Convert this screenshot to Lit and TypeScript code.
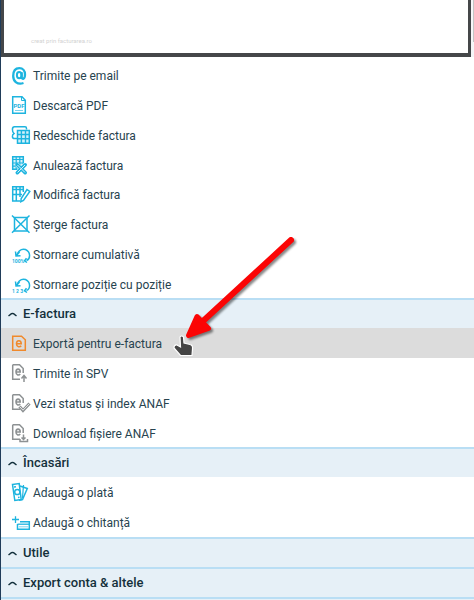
import { LitElement, html, svg, css, nothing } from "lit";
import { customElement, property } from "lit/decorators.js";
import { classMap } from "lit/directives/class-map.js";

const eDoc = svg`<path d="M1.7 .8H8.5L12.2 4.5V9M1.7 .8V15.2H9" /><path stroke-width="1.600" d="M5 8H9.2C9.2 4.200 5 4.200 5 8C5 11.500 8 11.500 9.200 10" />`;

const table = svg`<path d="M1.700 .7H12.300V13.300H1.700Z" fill="#d3f1fa" /><path d="M1.700 3.500H12.300M1.700 7H12.300M1.700 10.200H12.300M5.200 .7V13.300M8.800 .7V13.300" stroke-width="1.200" />`;

const undo = svg`<path d="M5.500 10.500C7.500 5.500 11 3.500 14.500 4.500C20 7 19.500 14 15.500 15.500" /><path d="M4.500 6.500L5 11L9.500 10.700M8.500 7L5.500 10.500M15.500 13.300L13.500 15.800L16 17.500" />`;

const icons: Record<string, unknown> = {
  at: svg`<path stroke-width="2.300" d="M12.500 17C6.500 19 2.200 15.500 2.200 10C2.200 5 4.500 2.200 8.300 2.200C12 2.200 14 5 14 8.500C14 13.500 10.900 13.500 10.700 11.500V6.200" /><ellipse stroke-width="2" cx="8.200" cy="9.200" rx="2.300" ry="3.100" />`,
  pdf: svg`<path d="M1.700 .8H11L14.300 4.200V17.200H1.700Z" /><path d="M10.500 1V4.500H14" stroke-width="1" /><text x="8" y="12" font-size="6" text-anchor="middle">PDF</text><path d="M4 14.500H12" stroke-width=".6" />`,
  reopen: svg`<path d="M15.500 3.500V2.500C15.500 1.300 15 .8 14 .8H3.500C.8 .8 .8 5.500 3 7.500C.6 9 1 12.500 3.500 12.500H6" /><path d="M6.500 4.500H18.300V17.300H6.500Z" fill="#d3f1fa" /><path d="M6.500 8.500H18.300M6.500 12.800H18.300M10.400 4.500V17.300M14.500 4.500V17.300" stroke-width="1.400" />`,
  cancel: svg`${table}<path d="M6 8.500L14.500 17M14.500 8.500L6 17" stroke="#fff" stroke-width="4.500" /><path d="M6.300 8.800L14.200 16.700M14.200 8.800L6.300 16.700" stroke-width="3.600" stroke-linecap="round" /><path d="M6.500 9L14 16.500M14 9L6.500 16.500" stroke="#d9f3fb" stroke-width="1" />`,
  edit: svg`<g transform="translate(0 1)"><path d="M12.300 6V.7H1.700V15H9" /><path d="M1.700 3.500H12.300M1.700 8.500H11M5.300 .7V15M9 .7V11" stroke-width="1.500" /></g><path d="M16 4.500L18.800 6.500L12.500 15.500L9.800 16.700L10.200 13.500Z" fill="#fff" />`,
  remove: svg`<path d="M3.500 2.500H16V16H3.500Z" /><path d="M1 .5L18.500 17.800M18.500 .5L1 17.800" />`,
  stornoAll: svg`${undo}<text x="1" y="17.500" font-size="5">100%</text>`,
  stornoRows: svg`${undo}<text x="1" y="17.500" font-size="5">1 2 3</text>`,
  export: svg`<path d="M1.700 2.200H10.500L14.300 5.800V16.300H1.700Z" /><path stroke-width="1.600" d="M5.500 9.800H10.200C10.200 5.800 5.500 5.800 5.500 9.800C5.500 13.300 9 13.300 10.200 11.800" />`,
  send: svg`${eDoc}<path d="M13 18V12.500M10.500 14.500L13 11.500L15.500 14.500" />`,
  status: svg`${eDoc}<path d="M8.500 12.500L12 16.500L18.500 9.500" stroke-width="3" /><path d="M8.700 12.700L12 16.200L18.200 9.800" stroke="#fff" stroke-width=".8" />`,
  download: svg`${eDoc}<path d="M12.500 10.500V15.500M10.500 13.500L12.500 15.500L14.500 13.500M9 15V17.500H16.500V15" />`,
  pay: svg`<path d="M9 3L16.300 5.500L11.500 16.500L8 17.300" /><path d="M12.500 2L11.500 15" stroke-width="1.200" /><path d="M1.500 1.500L8.200 .6L10.200 16.500L3.800 17.500Z" fill="#fff" /><circle cx="6.300" cy="9" r="2.600" /><path d="M3 4L5 3.700M7 14.500L8.500 14.200" />`,
  receipt: svg`<path d="M4.500 3.200V10M1 6.500H8" stroke-width="1.300" /><path d="M9 8.700H18.300V16.300H6.500V11" /><path d="M6.500 11.200H18" stroke-width="1.300" /><path d="M8 13.800H17" stroke-width="1" stroke="#7fd5ee" />`,
};

interface Action { icon: string; label: string; tone?: "grey" | "orange"; active?: boolean }
interface Section { title: string; actions: Action[] }

const documentActions: Action[] = [
  { icon: "at", label: "Trimite pe email" },
  { icon: "pdf", label: "Descarcă PDF" },
  { icon: "reopen", label: "Redeschide factura" },
  { icon: "cancel", label: "Anulează factura" },
  { icon: "edit", label: "Modifică factura" },
  { icon: "remove", label: "Șterge factura" },
  { icon: "stornoAll", label: "Stornare cumulativă" },
  { icon: "stornoRows", label: "Stornare poziție cu poziție" },
];

const sections: Section[] = [
  {
    title: "E-factura",
    actions: [
      { icon: "export", label: "Exportă pentru e-factura", tone: "orange", active: true },
      { icon: "send", label: "Trimite în SPV", tone: "grey" },
      { icon: "status", label: "Vezi status și index ANAF", tone: "grey" },
      { icon: "download", label: "Download fișiere ANAF", tone: "grey" },
    ],
  },
  {
    title: "Încasări",
    actions: [
      { icon: "pay", label: "Adaugă o plată" },
      { icon: "receipt", label: "Adaugă o chitanță" },
    ],
  },
  { title: "Utile", actions: [] },
  { title: "Export conta & altele", actions: [] },
];

@customElement("action-list")
class ActionList extends LitElement {
  @property({ attribute: false }) actions: Action[] = [];

  static styles = css`
    :host { display: block; }
    .list { list-style: none; margin: 0; padding: 0; }
    .row { position: relative; height: 30px; }
    .row:nth-child(4n) { height: 29px; }
    .action {
      display: flex; align-items: center; gap: 2px;
      box-sizing: border-box; width: 100%; height: 100%; padding: 2px 10px 0; border: 0;
      background: transparent; color: #27434f;
      font: 12px/20px Roboto, "Liberation Sans", sans-serif;
      text-align: left; white-space: nowrap; cursor: pointer;
    }
    .action.active { background: #dcdcdc; }
    .icon {
      flex: none; width: 20px; height: 20px; overflow: visible;
      color: #1db4df; fill: none; stroke: currentColor; stroke-width: 1.5;
    }
    .icon text { fill: currentColor; stroke: none; font-family: Roboto, sans-serif; font-weight: 700; }
    .icon.grey { color: #8d9193; }
    .icon.orange { color: #f0892b; }
    .pointer { position: absolute; left: 159px; top: -98px; width: 150px; height: 135px; pointer-events: none; z-index: 1; }
    .arrow { filter: drop-shadow(2px 2px 1px #0007); }
  `;

  render() {
    return html`<ul class="list">
      ${this.actions.map((a) => html`<li class="row">
        <button class=${classMap({ action: true, active: !!a.active })} type="button">
          <svg class="icon ${a.tone ?? ""}" viewBox="0 0 20 20" aria-hidden="true">${icons[a.icon]}</svg>
          <span>${a.label}</span>
        </button>
        ${a.active ? html`<svg class="pointer" viewBox="0 0 150 135" aria-hidden="true">
          <path d="M20 107Q21.500 105 23.500 107L24 113L30 114.500Q33 115 32.500 119L32 125.500H20.500L14 118Q14 114.500 17 115L20.500 117Z" fill="#454545" stroke="#fff" stroke-width="1.200" />
          <g class="arrow" stroke="#fb0505" stroke-linecap="round" stroke-linejoin="round">
            <path d="M131 10L42 92" stroke-width="6" />
            <path d="M28.500 105.500L37 86.500L48.500 98.500Z" fill="#fb0505" stroke-width="5" />
          </g>
        </svg>` : nothing}
      </li>`)}
    </ul>`;
  }
}

@customElement("app-root")
class AppRoot extends LitElement {
  static styles = css`
    :host {
      display: block; box-sizing: border-box; height: 100vh; overflow: hidden;
      border-left: 1px solid #203c59; background: #fff;
    }
    .preview { display: flex; background: #f6f6f8; }
    .sheet {
      flex: 1; display: flex; align-items: flex-end; box-sizing: border-box;
      height: 57px; margin-right: 3px; padding: 0 27px 8px;
      background: #fff; border: solid #454749; border-width: 0 3px 4px;
    }
    .credit { color: #d3d3d3; font: 6px/8px Roboto, sans-serif; }
    .thumb { width: 1px; height: 42px; margin-left: -1px; background: #c4c4c4; }
    .menu { padding-top: 3px; }
    .heading { margin: 0; }
    .toggle {
      display: flex; align-items: center; gap: 6px; box-sizing: border-box;
      width: 100%; height: 30px; padding: 0 7px; border: 0; border-top: 2px solid #b9def4;
      background: #e6f0f7; color: #14303c; cursor: pointer;
      font: 500 13px/20px Roboto, "Liberation Sans", sans-serif;
    }
    .chevron { width: 9px; height: 5px; fill: none; stroke: currentColor; stroke-width: 1.5; }
    .end { height: 8px; border-top: 2px solid #b9def4; background: #e6f0f7; }
  `;

  render() {
    return html`
      <div class="preview">
        <div class="sheet"><span class="credit">creat prin facturarea.ro</span></div>
        <div class="thumb"></div>
      </div>
      <nav class="menu">
        <action-list .actions=${documentActions}></action-list>
        ${sections.map((s) => html`<section>
          <h2 class="heading">
            <button class="toggle" type="button" aria-expanded="true">
              <svg class="chevron" viewBox="0 0 9 5" aria-hidden="true"><path d="M.5 4L3.500 1.700Q4.500 1.100 5.500 1.700L8.500 4" /></svg>
              <span>${s.title}</span>
            </button>
          </h2>
          ${s.actions.length ? html`<action-list .actions=${s.actions}></action-list>` : nothing}
        </section>`)}
        <div class="end"></div>
      </nav>`;
  }
}
